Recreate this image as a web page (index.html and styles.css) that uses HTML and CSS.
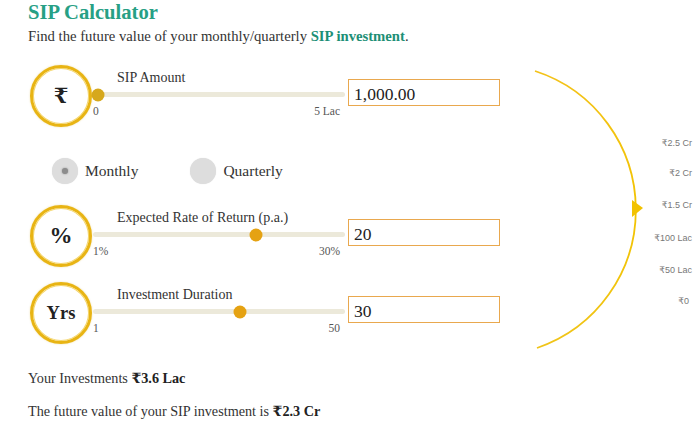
FILE: index.html
```html
<!DOCTYPE html>
<html>
<head>
<meta charset="utf-8">
<link rel="stylesheet" href="styles.css">
</head>
<body>
<div class="page">
  <h1 class="title">SIP Calculator</h1>
  <p class="subtitle">Find the future value of your monthly/quarterly <b class="hl">SIP investment</b>.</p>
  <div class="main">
    <div class="form">
      <div class="row">
        <div class="badge">₹</div>
        <div class="slider">
          <div class="slabel">SIP Amount</div>
          <div class="track"><span class="thumb thumb-y" style="left:2%"></span></div>
          <div class="minmax"><span>0</span><span>5 Lac</span></div>
        </div>
        <div class="field">1,000.00</div>
      </div>
      <div class="radios">
        <label class="radio"><span class="dot on"></span>Monthly</label>
        <label class="radio"><span class="dot"></span>Quarterly</label>
      </div>
      <div class="row">
        <div class="badge badge-pct">%</div>
        <div class="slider">
          <div class="slabel">Expected Rate of Return (p.a.)</div>
          <div class="track"><span class="thumb" style="left:64.5%"></span></div>
          <div class="minmax"><span>1%</span><span>30%</span></div>
        </div>
        <div class="field">20</div>
      </div>
      <div class="row row-last">
        <div class="badge badge-yrs">Yrs</div>
        <div class="slider">
          <div class="slabel">Investment Duration</div>
          <div class="track"><span class="thumb" style="left:58.5%"></span></div>
          <div class="minmax"><span>1</span><span>50</span></div>
        </div>
        <div class="field">30</div>
      </div>
    </div>
    <svg class="chart" width="180" height="300" viewBox="0 0 180 300">
      <defs>
        <linearGradient id="g" x1="0" y1="0" x2="0" y2="1">
          <stop offset="0" stop-color="#f3c21a"/>
          <stop offset="0.5" stop-color="#f2c300"/>
          <stop offset="1" stop-color="#f0c419"/>
        </linearGradient>
      </defs>
      <path d="M15,15 A146,146 0 0 1 17,292" fill="none" stroke="url(#g)" stroke-width="1.8"/>
      <polygon points="112,144 123,152 112,161" fill="#f2c200"/>
      <g class="axis">
        <text x="172" y="90">₹2.5 Cr</text>
        <text x="172" y="120">₹2 Cr</text>
        <text x="172" y="152">₹1.5 Cr</text>
        <text x="172" y="185">₹100 Lac</text>
        <text x="172" y="217">₹50 Lac</text>
        <text x="169" y="248">₹0</text>
      </g>
    </svg>
  </div>
  <div class="results">
    <p class="result">Your Investments <b>₹3.6 Lac</b></p>
    <p class="result">The future value of your SIP investment is <b>₹2.3 Cr</b></p>
  </div>
</div>
</body>
</html>
```
FILE: styles.css
```css
html, body {
  margin: 0;
  padding: 0;
  background: #fff;
}
body {
  font-family: "Liberation Serif", "DejaVu Serif", "Noto Sans", serif;
  color: #333;
}
.page {
  padding: 0 0 0 28px;
}
.title {
  margin: 0;
  padding-top: 1px;
  font-size: 20.6px;
  line-height: 22px;
  font-weight: bold;
  color: #27a085;
}
.subtitle {
  margin: 3px 0 0 0;
  font-size: 14.7px;
  line-height: 20px;
  color: #333;
}
.hl {
  color: #1d8f76;
}
.main {
  display: flex;
  align-items: flex-start;
  margin-top: 9px;
}
.form {
  width: 474px;
  padding-top: 10px;
  flex: none;
}
.row {
  display: flex;
  align-items: flex-start;
  height: 62px;
}
.badge {
  width: 56px;
  height: 56px;
  margin-left: 2px;
  border-radius: 50%;
  border: 3px solid #e8b414;
  box-shadow: inset 0 0 0 1px #f5d66a, 0 0 2px rgba(200, 160, 0, 0.35);
  display: flex;
  align-items: center;
  justify-content: center;
  font-weight: bold;
  font-size: 21px;
  color: #222;
  flex: none;
}
.badge-pct {
  font-size: 23px;
}
.badge-yrs {
  font-size: 18.5px;
}
.slider {
  width: 252px;
  margin-left: 1px;
  padding-top: 5px;
  flex: none;
}
.slabel {
  padding-left: 24px;
  font-size: 14px;
  line-height: 16px;
  color: #333;
}
.track {
  position: relative;
  height: 5px;
  margin-top: 6px;
  background: #ece9da;
  border-radius: 3px;
}
.thumb {
  position: absolute;
  top: 50%;
  width: 13px;
  height: 13px;
  border-radius: 50%;
  background: #e5a212;
  transform: translate(-50%, -50%);
}
.thumb-y {
  background: #d6a81c;
}
.minmax {
  display: flex;
  justify-content: space-between;
  margin-top: 7px;
  padding-right: 5px;
  font-size: 11.5px;
  line-height: 14px;
  color: #555;
}
.field {
  margin-left: 3px;
  margin-top: 14px;
  width: 145px;
  height: 25px;
  border: 1.5px solid #e9a84e;
  padding-left: 5px;
  font-size: 17.5px;
  line-height: 28px;
  color: #222;
  flex: none;
}
.radios {
  display: flex;
  height: 78px;
  align-items: center;
  padding-top: 10px;
  box-sizing: border-box;
}
.radio {
  display: flex;
  align-items: center;
  font-size: 15.5px;
  color: #333;
  margin-left: 24px;
}
.radio + .radio {
  margin-left: 52px;
}
.dot {
  width: 26px;
  height: 26px;
  border-radius: 50%;
  background: #dddddd;
  margin-right: 7px;
  display: flex;
  align-items: center;
  justify-content: center;
  box-shadow: 0 0 1px rgba(0,0,0,0.15);
}
.dot.on::after {
  content: "";
  width: 6px;
  height: 6px;
  border-radius: 50%;
  background: #8c8c8c;
  box-shadow: 0 0 2px #8c8c8c;
}
.row-last {
  margin-top: 15px;
}
.chart {
  margin-left: 18px;
  margin-top: 1px;
  flex: none;
}
.axis text {
  font-family: "Liberation Sans", "DejaVu Sans", sans-serif;
  font-size: 9px;
  fill: #777;
  text-anchor: end;
}
.results {
  margin-top: 13px;
}
.result {
  margin: 0;
  font-size: 14.2px;
  line-height: 18px;
  color: #333;
}
.result + .result {
  margin-top: 15px;
}
.result b {
  color: #222;
}
```
